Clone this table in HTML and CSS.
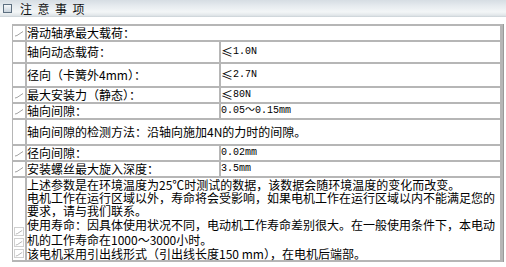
FILE: index.html
```html
<!DOCTYPE html>
<html lang="zh">
<head>
<meta charset="utf-8">
<link rel="stylesheet" href="styles.css">
</head>
<body>
<div class="titlebar">
  <span class="box"></span>
  <span class="title">注意事项</span>
</div>
<div class="grid">
  <div class="ic"><svg class="mark" viewBox="0 0 10 7" width="10" height="7"><polyline points="1,6 3,5.5 9,1.5" /></svg></div>
  <div class="txt span">滑动轴承最大载荷：</div>

  <div class="ic"></div>
  <div class="txt">轴向动态载荷：</div>
  <div class="val"><span class="le">≤</span>1.0N</div>

  <div class="ic"></div>
  <div class="txt">径向（卡簧外4mm）：</div>
  <div class="val"><span class="le">≤</span>2.7N</div>

  <div class="ic"><svg class="mark" viewBox="0 0 10 7" width="10" height="7"><polyline points="1,6 3,5.5 9,1.5" /></svg></div>
  <div class="txt">最大安装力（静态）：</div>
  <div class="val"><span class="le">≤</span>80N</div>

  <div class="ic"><svg class="mark" viewBox="0 0 10 7" width="10" height="7"><polyline points="1,6 3,5.5 9,1.5" /></svg></div>
  <div class="txt">轴向间隙：</div>
  <div class="val">0.05～0.15mm</div>

  <div class="ic"></div>
  <div class="txt span">轴向间隙的检测方法：沿轴向施加4N的力时的间隙。</div>

  <div class="ic"><svg class="mark" viewBox="0 0 10 7" width="10" height="7"><polyline points="1,6 3,5.5 9,1.5" /></svg></div>
  <div class="txt">径向间隙：</div>
  <div class="val">0.02mm</div>

  <div class="ic"><svg class="mark" viewBox="0 0 10 7" width="10" height="7"><polyline points="1,6 3,5.5 9,1.5" /></svg></div>
  <div class="txt">安装螺丝最大旋入深度：</div>
  <div class="val">3.5mm</div>

  <div class="ic stack">
    <span class="mini"><svg class="mark" viewBox="0 0 10 7" width="10" height="7"><polyline points="1,6 3,5.5 9,1.5" /></svg></span>
    <span class="mini"><svg class="mark" viewBox="0 0 10 7" width="10" height="7"><polyline points="1,6 3,5.5 9,1.5" /></svg></span>
    <span class="mini"><svg class="mark" viewBox="0 0 10 7" width="10" height="7"><polyline points="1,6 3,5.5 9,1.5" /></svg></span>
  </div>
  <div class="txt span notes">
    <p class="p1">上述参数是在环境温度为25℃时测试的数据，该数据会随环境温度的变化而改变。<br>电机工作在运行区域以外，寿命将会受影响，如果电机工作在运行区域以内不能满足您的<br>要求，请与我们联系。</p>
    <p class="p2">使用寿命：因具体使用状况不同，电动机工作寿命差别很大。在一般使用条件下，本电动<br>机的工作寿命在1000～3000小时。</p>
    <p class="p3">该电机采用引出线形式（引出线长度150 mm），在电机后端部。</p>
  </div>
</div>
</body>
</html>
```

FILE: styles.css
```css
html, body {
  margin: 0;
  padding: 0;
  background: #ffffff;
}
body {
  width: 506px;
  height: 267px;
  overflow: hidden;
  font-family: "Noto Sans CJK SC", "Noto Sans", sans-serif;
  font-size: 12px;
  color: #000;
}
.titlebar {
  height: 17px;
  display: flex;
  align-items: center;
  background: linear-gradient(to bottom, #d6dde3 0%, #e6ebef 35%, #f3f6f7 70%, #e2e7ea 90%, #c9d1d6 100%);
}
.box {
  width: 7px;
  height: 7px;
  margin-left: 3px;
  border: 1px solid #5d6f80;
  background: linear-gradient(to bottom, #f6f8fa, #c9d3dc);
}
.title {
  margin-left: 8px;
  font-size: 12px;
  letter-spacing: 5.5px;
  color: #111;
  line-height: 17px;
}
.grid {
  margin: 7px 0 0 12px;
  width: 492px;
  box-sizing: border-box;
  display: grid;
  grid-template-columns: 12px 192px 1fr;
  grid-template-rows: 14px 20px 22px 14px 14px 24px 14px 14px 82px;
  gap: 2px;
  padding: 2px 3px 2px 1px;
  background: #b6b6b6;
  border-right: 1px solid #9a9a9a;
}
.grid > div {
  background: #fff;
}
.ic {
  display: flex;
  align-items: center;
  justify-content: center;
}
.mark polyline {
  fill: none;
  stroke: #a3a3a3;
  stroke-width: 1;
}
.txt, .val {
  display: flex;
  align-items: center;
  white-space: nowrap;
  line-height: 14px;
}
.val {
  font-family: "Liberation Mono", "Noto Sans CJK SC", monospace;
  font-size: 10px;
}
.le {
  font-family: "Noto Sans CJK SC", sans-serif;
  font-size: 12px;
  width: 12px;
}
.span {
  grid-column: 2 / 4;
}
.notes {
  display: block;
}
.notes p {
  margin: 0;
}
.p1 {
  line-height: 13px;
}
.p2 {
  line-height: 15px;
}
.p3 {
  line-height: 13px;
}
.stack {
  flex-direction: column;
  justify-content: flex-start;
  padding-top: 49px;
}
.mini {
  width: 10px;
  height: 9px;
  margin-bottom: 2px;
  border: 1px solid #d0d0d0;
  box-sizing: border-box;
  display: flex;
  align-items: center;
  justify-content: center;
}
.mini svg {
  width: 8px;
  height: 6px;
}
```
